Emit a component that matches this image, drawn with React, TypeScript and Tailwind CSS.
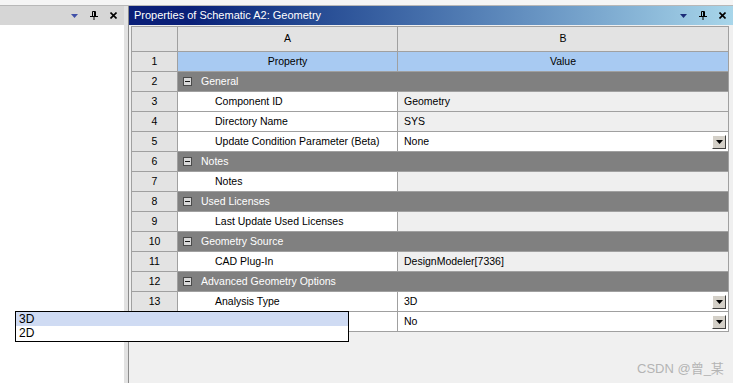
type Row =
  | { n: number; group: string }
  | { n: number; prop: string; value: string; combo?: boolean };

const rows: Row[] = [
  { n: 2, group: "General" },
  { n: 3, prop: "Component ID", value: "Geometry" },
  { n: 4, prop: "Directory Name", value: "SYS" },
  { n: 5, prop: "Update Condition Parameter (Beta)", value: "None", combo: true },
  { n: 6, group: "Notes" },
  { n: 7, prop: "Notes", value: "" },
  { n: 8, group: "Used Licenses" },
  { n: 9, prop: "Last Update Used Licenses", value: "" },
  { n: 10, group: "Geometry Source" },
  { n: 11, prop: "CAD Plug-In", value: "DesignModeler[7336]" },
  { n: 12, group: "Advanced Geometry Options" },
  { n: 13, prop: "Analysis Type", value: "3D", combo: true },
  { n: 14, prop: "Use Associativity", value: "No", combo: true },
];

function PaneButtons({ tri }: { tri: string }) {
  return (
    <div className="flex items-center gap-[12px]">
      <svg width="7" height="4" viewBox="0 0 7 4">
        <path d="M0 0H7L3.5 4Z" fill={tri} />
      </svg>
      <svg width="8" height="9" viewBox="0 0 8 9" fill="none" stroke="#000">
        <path d="M2.5 0.5H5.5V5.5M2.5 0.5V5.5M4.5 0.5V5.5M0 5.5H8M4 5.5V9" />
      </svg>
      <svg width="7" height="7" viewBox="0 0 7 7" stroke="#000" strokeWidth="1.6">
        <path d="M0.5 0.5L6.5 6.5M6.5 0.5L0.5 6.5" />
      </svg>
    </div>
  );
}

function Minus() {
  return (
    <svg width="9" height="9" viewBox="0 0 9 9" className="shrink-0">
      <rect x="0.5" y="0.5" width="8" height="8" fill="#d9d9d9" stroke="#4a4a4a" />
      <path d="M2 4.5H7" stroke="#1a1a1a" />
    </svg>
  );
}

function ComboButton() {
  return (
    <div className="w-[14px] h-[14px] bg-[#d4d0c8] border border-t-white border-l-white border-r-[#404040] border-b-[#404040] flex items-center justify-center">
      <svg width="7" height="4" viewBox="0 0 7 4">
        <path d="M0 0H7L3.5 4Z" fill="#000" />
      </svg>
    </div>
  );
}

function NumCell({ n }: { n: number | string }) {
  return (
    <div className="w-[46px] shrink-0 h-full bg-[#e3e3e3] border-r border-[#a0a0a0] flex items-center justify-center">
      {n}
    </div>
  );
}

export default function App() {
  return (
    <div className="relative w-[733px] h-[383px] overflow-hidden bg-[#f0f0f0] font-['Liberation_Sans',sans-serif] text-[10.5px] text-black flex flex-col">
      <div className="h-[6px] shrink-0 bg-[#f5f5f5] border-b border-[#b8b8b8]" />
      <div className="flex flex-1 min-h-0">
        {/* left pane */}
        <div className="w-[124px] flex flex-col bg-white">
          <div className="h-[19px] bg-[#d6d6d6] flex items-center justify-end pr-[7px]">
            <PaneButtons tri="#4050a8" />
          </div>
          <div className="flex-1" />
        </div>
        <div className="w-[4px] bg-[#e2e2e2]" />
        <div className="w-px bg-[#8c8c8c]" />

        {/* properties pane */}
        <div className="flex-1 flex flex-col">
          <div className="h-[19px] bg-gradient-to-r from-[#0a1f78] from-10% to-[#a8d6ea] flex items-center pl-[5px] pr-[7px] text-white text-[11px]">
            <span className="flex-1">Properties of Schematic A2: Geometry</span>
            <PaneButtons tri="#1c2c78" />
          </div>
          <div className="h-px bg-[#f0f0f0]" />
          <div className="ml-[2px] w-[598px] border-t border-l border-[#a0a0a0]">
            <div className="flex h-[25px] border-b border-[#a0a0a0]">
              <NumCell n="" />
              <div className="w-[220px] bg-[#e3e3e3] border-r border-[#a0a0a0] flex items-center justify-center">A</div>
              <div className="w-[331px] bg-[#e3e3e3] border-r border-[#a0a0a0] flex items-center justify-center">B</div>
            </div>
            <div className="flex h-[20px] border-b border-[#a0a0a0]">
              <NumCell n={1} />
              <div className="w-[220px] bg-[#a8caf2] border-r border-[#a0a0a0] flex items-center justify-center">Property</div>
              <div className="w-[331px] bg-[#a8caf2] border-r border-[#a0a0a0] flex items-center justify-center">Value</div>
            </div>
            {rows.map((r) =>
              "group" in r ? (
                <div key={r.n} className="flex h-[20px] border-b border-[#a0a0a0]">
                  <NumCell n={r.n} />
                  <div className="w-[551px] bg-[#808080] border-r border-[#a0a0a0] flex items-center pl-[5px] gap-[9px] text-white">
                    <Minus />
                    <span>{r.group}</span>
                  </div>
                </div>
              ) : (
                <div key={r.n} className="flex h-[20px] border-b border-[#a0a0a0]">
                  <NumCell n={r.n} />
                  <div className="w-[220px] bg-white border-r border-[#a0a0a0] flex items-center pl-[37px]">
                    {r.prop}
                  </div>
                  <div
                    className={`w-[331px] border-r border-[#a0a0a0] flex items-center pl-[6px] pr-[2px] ${
                      r.combo ? "bg-white" : "bg-[#efefef]"
                    }`}
                  >
                    <span className="flex-1">{r.value}</span>
                    {r.combo && <ComboButton />}
                  </div>
                </div>
              )
            )}
          </div>
        </div>
      </div>

      {/* open dropdown list */}
      <div className="absolute left-[15px] top-[311px] w-[334px] border border-black bg-white text-[12px] pb-px">
        <div className="h-[14px] leading-[14px] pl-[3px] bg-[#cfdbf3]">3D</div>
        <div className="h-[14px] leading-[14px] pl-[3px]">2D</div>
      </div>

      <div className="absolute left-[637px] top-[359px] text-[13px] text-[#b4b4b4] font-['Liberation_Sans','Noto_Sans_CJK_SC',sans-serif]">
        CSDN @曾_某
      </div>
    </div>
  );
}
